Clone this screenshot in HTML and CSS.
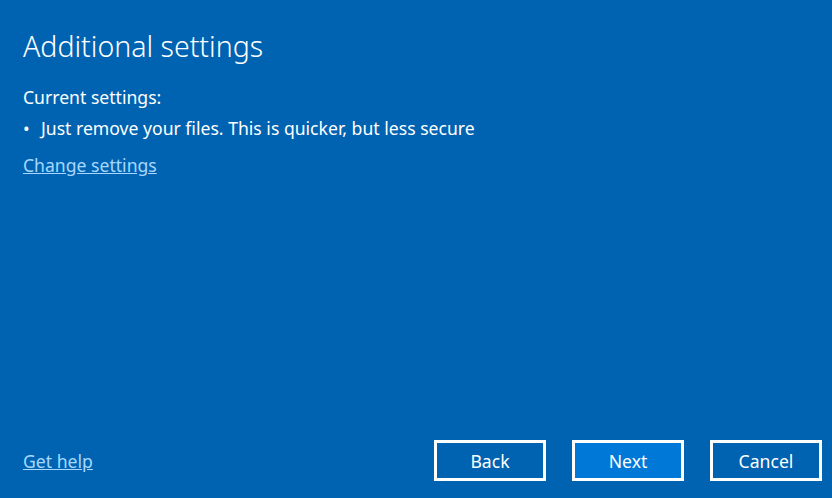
FILE: index.html
```html
<!DOCTYPE html>
<html lang="en">
  <head>
    <meta charset="UTF-8" />
    <meta name="viewport" content="width=device-width, initial-scale=1.0" />
    <title>Additional settings</title>
    <link rel="stylesheet" href="styles.css">
  </head>
  <body>
    <div class="page">
      <div class="content">
        <h1 class="title">Additional settings</h1>
        <p class="label">Current settings:</p>
        <ul class="settings-list">
          <li>Just remove your files. This is quicker, but less secure</li>
        </ul>
        <a class="link" href="#">Change settings</a>
      </div>

      <div class="footer">
        <a class="link" href="#">Get help</a>
        <div class="buttons">
          <button class="btn">Back</button>
          <button class="btn btn-primary">Next</button>
          <button class="btn">Cancel</button>
        </div>
      </div>
    </div>
  </body>
</html>
```

FILE: styles.css
```css
html,
body {
  margin: 0;
  height: 100%;
}
body {
  background-color: #0063b1;
  color: #fff;
  font-family: "Segoe UI", "Noto Sans", sans-serif;
  font-size: 17.6px;
  user-select: none;
}
.page {
  display: flex;
  flex-direction: column;
  height: 100vh;
  box-sizing: border-box;
  padding: 0 10px 17px 23px;
}
.content {
  flex: 1;
}
.title {
  font-size: 28.5px;
  font-weight: 300;
  margin: 27px 0 0 0;
  line-height: 38px;
}
.label {
  margin: 20px 0 0 0;
  line-height: 24px;
}
.settings-list {
  margin: 7px 0 0 0;
  padding-left: 18px;
  line-height: 24px;
  list-style: none;
}
.settings-list li::before {
  content: "\2022";
  display: inline-block;
  width: 18px;
  margin-left: -18px;
}
.link {
  display: inline-block;
  color: #a6d8ff;
  text-decoration: underline;
  line-height: 24px;
}
.content .link {
  margin-top: 13px;
}
.footer {
  display: flex;
  justify-content: space-between;
  align-items: center;
}
.buttons {
  display: flex;
  gap: 26px;
}
.btn {
  width: 112px;
  height: 41px;
  background-color: #0063b1;
  border: 3px solid #fff;
  color: #fff;
  font-family: inherit;
  font-size: 17.6px;
  cursor: pointer;
}
.btn-primary {
  background-color: #0078d7;
}
```
